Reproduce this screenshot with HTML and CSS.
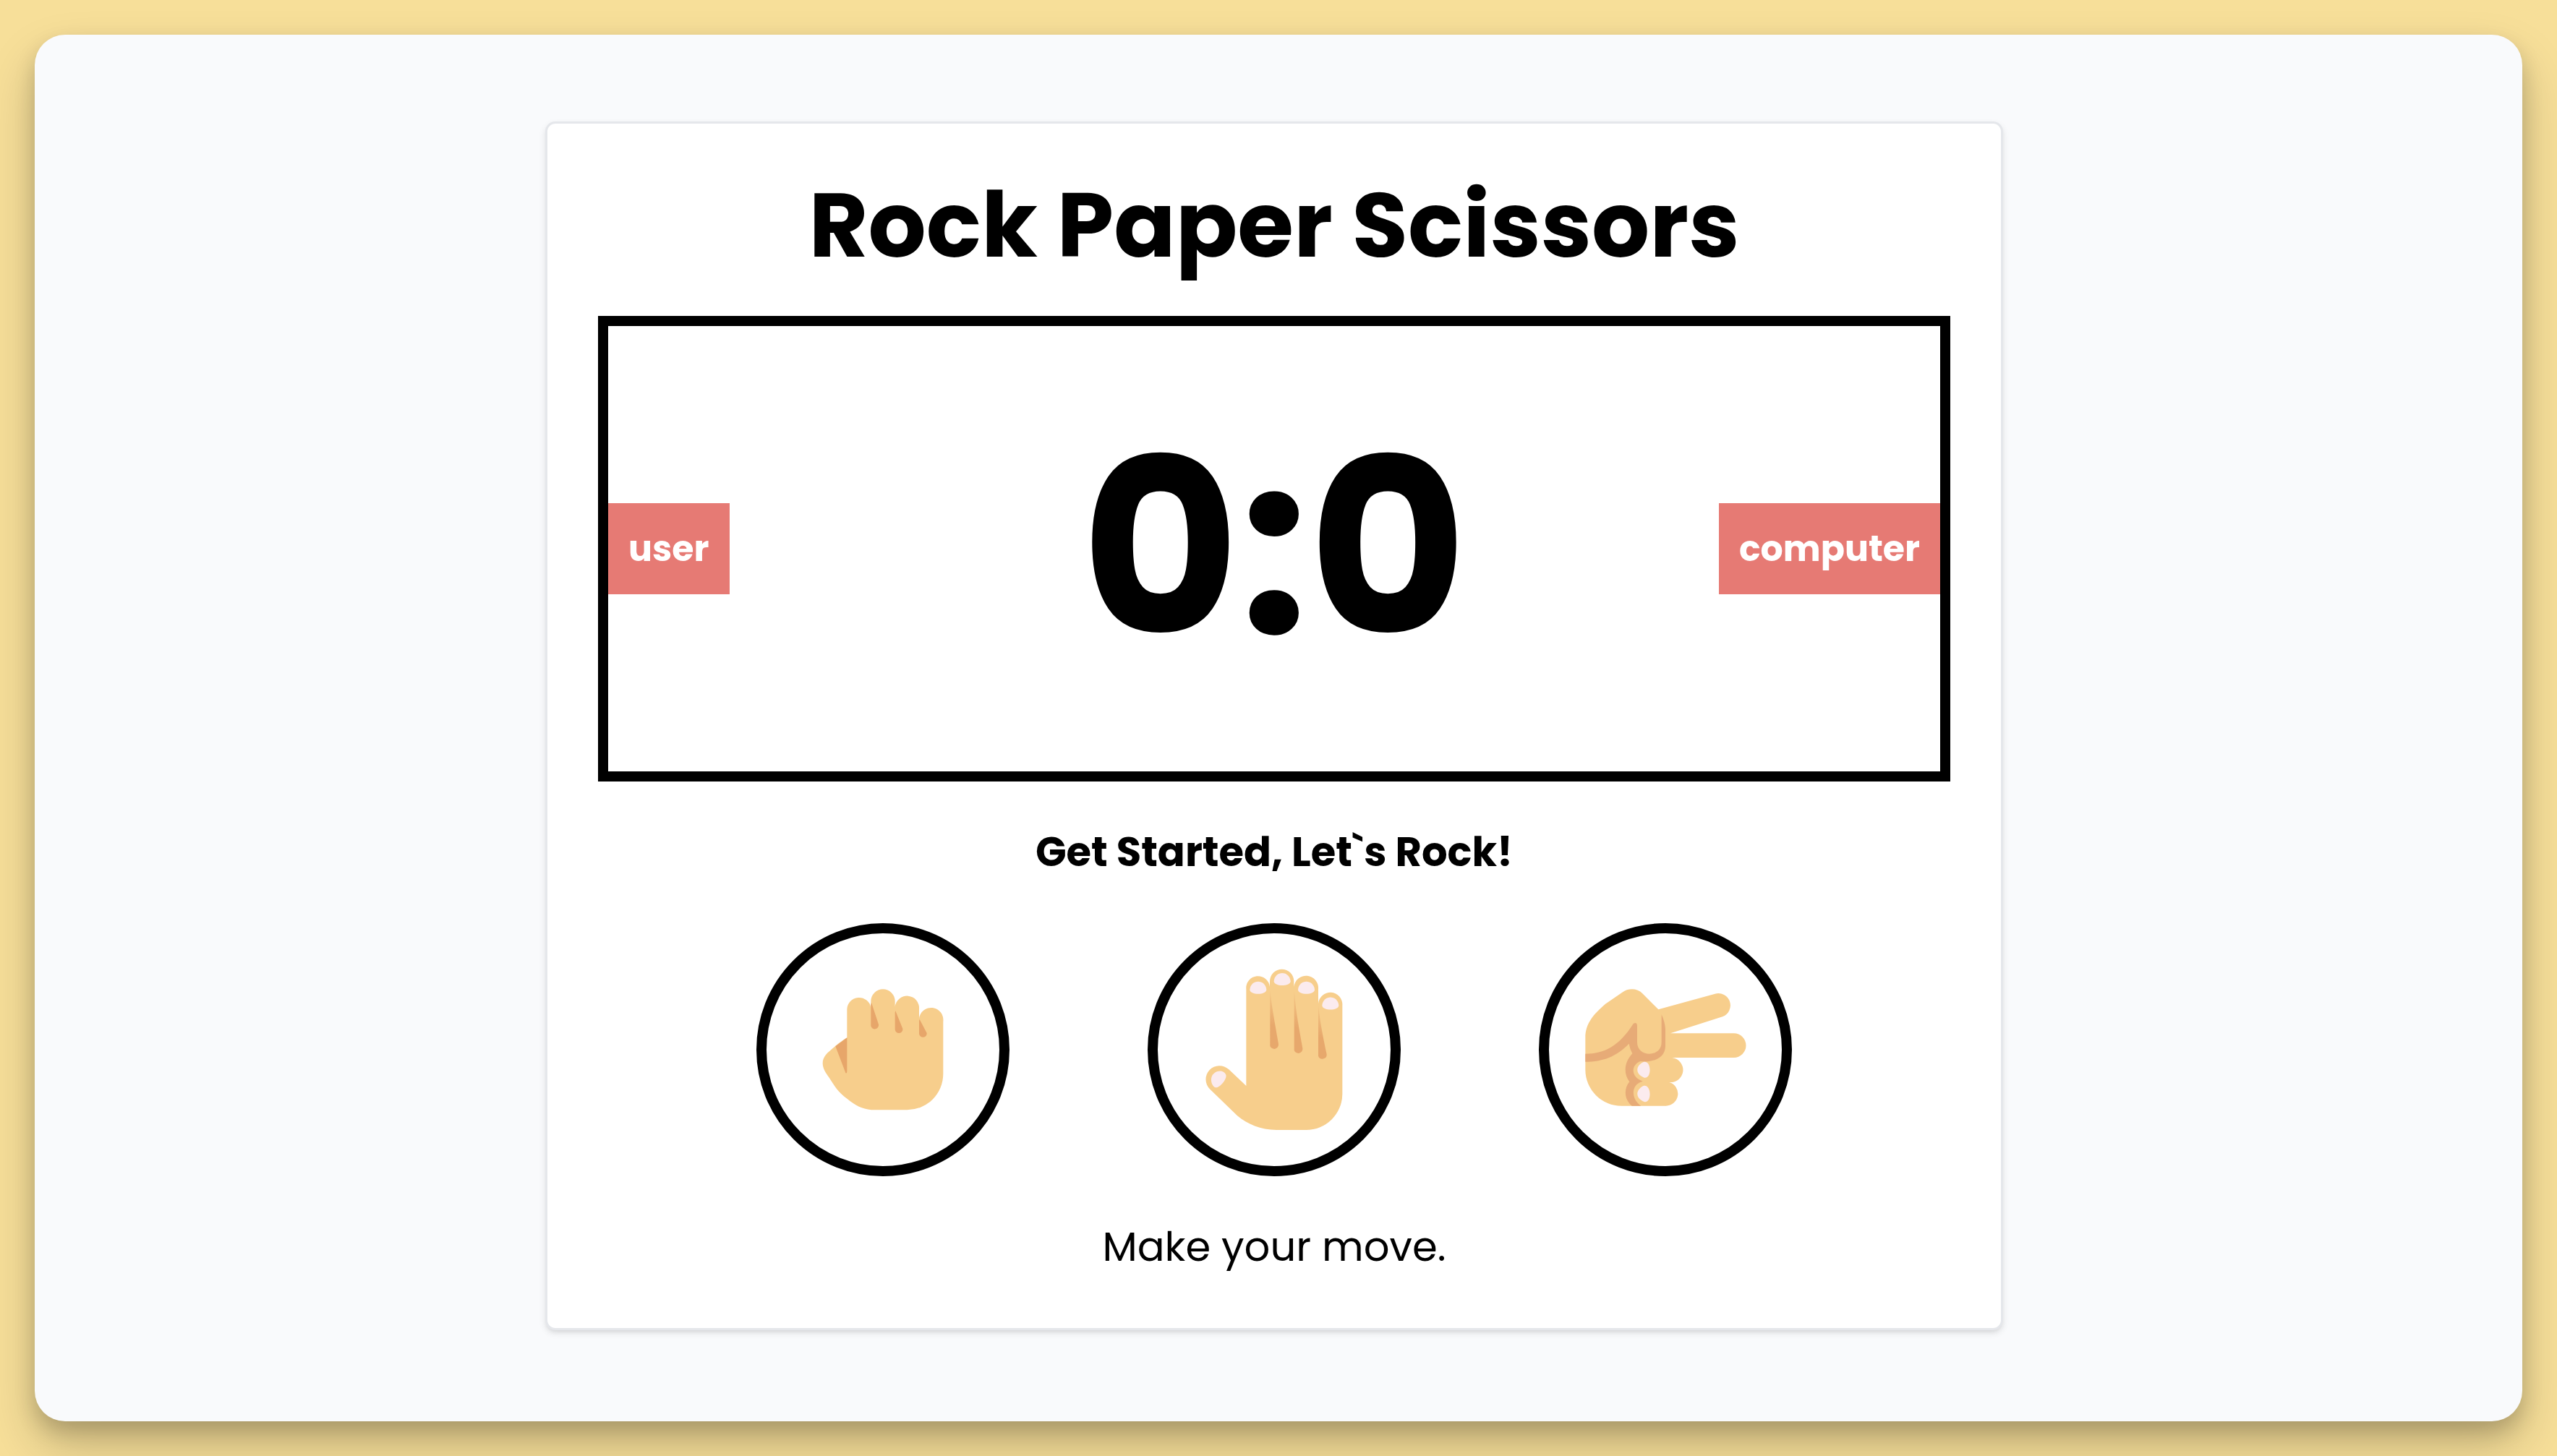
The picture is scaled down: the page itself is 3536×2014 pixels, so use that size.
FILE: index.html
```html
<!DOCTYPE html>
<html lang="en">
<head>
<meta charset="utf-8">
<meta name="viewport" content="width=device-width, initial-scale=1">
<title>Rock Paper Scissors</title>
<link rel="stylesheet" href="styles.css">
</head>
<body>
<div class="panel">
<main class="card">
  <h1 class="title">Rock Paper Scissors</h1>
  <section class="board">
    <span class="badge">user</span>
    <p class="score">0:0</p>
    <span class="badge badge-end">computer</span>
  </section>
  <h2 class="result">Get Started, Let`s Rock!</h2>
  <div class="choices">
    <button class="choice" type="button" aria-label="Rock">
      <svg class="hand" viewBox="90 93 966 966" aria-hidden="true">
        <path class="skin" d="M424 526C400 541 385 553 373 563C340 590 323 605 323 632C323 655 338 675 350 692C375 730 385 750 425 780C460 808 490 826 540 826H673A150 150 0 0 0 823 676V458A50 50 0 0 0 723 446V408A50 50 0 0 0 623 398V375A50 50 0 0 0 523 375V400A50 50 0 0 0 424 408Z"/>
        <path class="shade" d="M424 526L376 562L418 672Q424 678 424 660ZM525 380L555 471A16 16 0 0 1 523 477V390ZM625 415L655 489A16 16 0 0 1 623 493V420ZM725 450L755 507A16 16 0 0 1 723 510V455Z"/>
      </svg>
    </button>
    <button class="choice" type="button" aria-label="Paper">
      <svg class="hand" viewBox="93 93 966 966" aria-hidden="true">
        <path class="skin" d="M460 726V325A49 49 0 0 1 558 315V292A50 50 0 0 1 658 292V315A50 50 0 0 1 759 325V385A50 50 0 0 1 859 392V760A150 150 0 0 1 709 909H585C520 909 465 885 423 850L310 740A54 54 0 0 1 388 658Z"/>
        <g class="nail">
          <path id="nail" d="M475 327C479 282 540 282 544 327C544 350 475 350 475 327Z"/>
          <use href="#nail" x="100" y="-35"/>
          <use href="#nail" x="200"/>
          <use href="#nail" x="300" y="65"/>
          <path d="M330 671C345 661 368 661 376 680C382 697 350 735 333 733C316 728 304 688 330 671Z"/>
        </g>
        <defs>
          <linearGradient id="crease" x1="0" y1="0" x2="0" y2="1">
            <stop offset="0" stop-color="#e7a86c" stop-opacity=".2"/>
            <stop offset=".6" stop-color="#e7a86c"/>
          </linearGradient>
        </defs>
        <path fill="url(#crease)" d="M559 330C566 400 580 470 594 552A18 18 0 0 1 559 560Z"/>
        <path fill="url(#crease)" d="M659 330C666 420 680 490 694 570A18 18 0 0 1 659 578Z"/>
        <path fill="url(#crease)" d="M759 390C766 460 780 530 794 595A18 18 0 0 1 759 602Z"/>
      </svg>
    </button>
    <button class="choice" type="button" aria-label="Scissors">
      <svg class="hand" viewBox="96 93 966 966" aria-hidden="true">
        <path class="skin" d="M247 525C247 465 285 425 330 386L400 338C425 320 462 320 484 343L550 409L785 344A50 50 0 0 1 816 439L600 508H863A50 50 0 0 1 863 609H607A50 50 0 0 1 595 711A50 50 0 0 1 581 809H397A150 150 0 0 1 247 660Z"/>
        <path class="fold" d="M247 593C325 593 388 561 446 468Q460 460 462 475V545C462 609 563 609 563 545V430Q577 460 579 490V560C579 605 537 631 475 624C435 640 435 690 485 707C435 720 435 780 478 809H440C405 780 408 735 430 709C405 675 407 630 442 592Q432 575 428 551C375 605 320 626 247 626Z"/>
        <path class="nail" d="M488 627C523 618 523 700 491 692C454 678 454 643 488 627ZM488 726C523 718 523 800 491 792C454 778 454 743 488 726Z"/>
      </svg>
    </button>
  </div>
  <p class="prompt">Make your move.</p>
</main>
</div>
</body>
</html>
```
FILE: styles.css
```css
* {
  box-sizing: border-box;
  margin: 0;
  padding: 0;
}

body {
  background: #f7df99;
  color: #000;
  font-family: Poppins, Inter, "Open Sans", sans-serif;
  padding: 48px;
}

.panel {
  min-height: calc(100vh - 96px);
  padding: 120px 132px 126px 120px;
  border-radius: 42px;
  background: #f9fafc;
  box-shadow: 0 14px 28px rgba(0, 0, 0, .17), 0 35px 70px rgba(0, 0, 0, .2);
}

.card {
  max-width: 2016px;
  margin: 0 auto;
  padding: 70px;
  border: 3px solid #e5e7eb;
  border-radius: 14px;
  background: #fff;
  box-shadow: 0 4px 10px rgba(0, 0, 0, .1), 0 4px 7px -4px rgba(0, 0, 0, .1);
  text-align: center;
}

.title {
  margin-bottom: 56px;
  font-size: 126px;
  line-height: 140px;
}

.board {
  display: grid;
  grid-template-columns: 1fr auto 1fr;
  align-items: center;
  border: 14px solid #000;
}

.score {
  font-size: 336px;
  font-weight: 700;
  line-height: 616px;
}

.badge {
  justify-self: start;
  padding: 28px;
  background: #e67a74;
  color: #fff;
  font-size: 49px;
  font-weight: 700;
  line-height: 70px;
}

.badge-end {
  justify-self: end;
}

.result,
.prompt {
  padding: 56px 0;
  font-size: 56px;
  line-height: 84px;
}

.prompt {
  padding-bottom: 0;
}

.choices {
  display: flex;
  flex-wrap: wrap;
  justify-content: center;
  gap: 191px;
}

.choice {
  width: 350px;
  height: 350px;
  border: 14px solid #000;
  border-radius: 50%;
  background: #fff;
  cursor: pointer;
}

.hand {
  display: block;
  width: 100%;
}

.skin {
  fill: #f7ce8c;
}

.shade {
  fill: #e7a66a;
}

.fold {
  fill: #e7ab77;
}

.nail {
  fill: #fbebee;
}
```
